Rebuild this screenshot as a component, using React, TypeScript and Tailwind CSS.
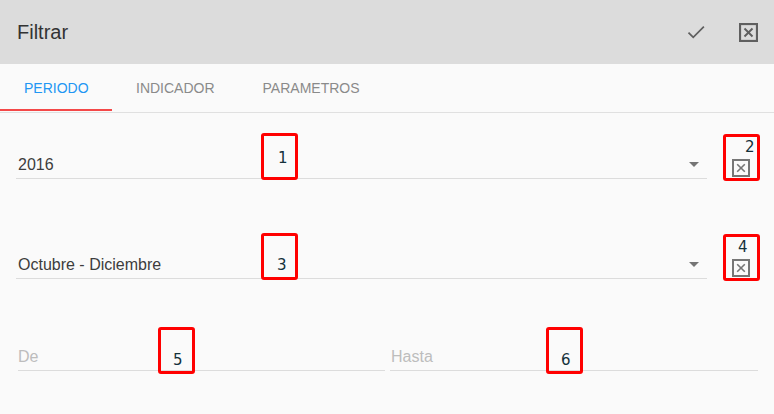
import React from 'react';

interface MarkerProps {
    label: string;
    boxClass: string;
    numClass: string;
}

// Recuadros rojos de anotacion sobre la captura
function Marker(props: MarkerProps) {
    return (
        <div className={`absolute w-[37px] h-[47px] border-[3px] border-[#ff0000] rounded-[3px] ${props.boxClass}`}>
            <span
                className={`absolute text-[15px] leading-none text-[#14313b] ${props.numClass}`}
                style={{fontFamily: '"DejaVu Sans", sans-serif'}}
            >
                {props.label}
            </span>
        </div>
    );
}

function ClearIcon() {
    return (
        <svg width="18" height="18" viewBox="0 0 18 18" className="block">
            <rect x="1" y="1" width="16" height="16" fill="none" stroke="#767676" strokeWidth="2" />
            <path d="M5.2 5.2 L12.8 12.8 M12.8 5.2 L5.2 12.8" stroke="#767676" strokeWidth="1.6" />
        </svg>
    );
}

function Arrow() {
    return (
        <svg width="10" height="5" viewBox="0 0 10 5" className="block">
            <path d="M0 0 L10 0 L5 5 Z" fill="#757575" />
        </svg>
    );
}

export default function App() {
    const tabs = ['PERIODO', 'INDICADOR', 'PARAMETROS'];

    return (
        <div
            className="relative w-[774px] h-[414px] bg-[#fafafa] overflow-hidden"
            style={{fontFamily: '"Liberation Sans", Arial, sans-serif'}}
        >
            {/* Cabecera */}
            <div className="h-16 bg-[#dcdcdc] flex items-center pl-[17px] pr-[16px]">
                <span className="text-[20px] text-[#333333] flex-grow">Filtrar</span>
                <svg width="22" height="22" viewBox="0 0 24 24" className="mr-[32px]">
                    <path d="M3.8 12.6 L9 17.8 L20.6 6.2" fill="none" stroke="#5f5f5f" strokeWidth="1.9" />
                </svg>
                <svg width="19" height="19" viewBox="0 0 18 18">
                    <rect x="1" y="1" width="16" height="16" fill="none" stroke="#5f5f5f" strokeWidth="2" />
                    <path d="M5.2 5.2 L12.8 12.8 M12.8 5.2 L5.2 12.8" stroke="#5f5f5f" strokeWidth="1.8" />
                </svg>
            </div>

            {/* Pestañas */}
            <div className="h-[49px] flex border-b border-[#e0e0e0]">
                {tabs.map((tab, i) => (
                    <div
                        key={tab}
                        className={`relative flex items-center px-6 text-[14px] ${i === 0 ? 'text-[#2196f3] w-[112px]' : 'text-[#8a8a8a]'}`}
                    >
                        {tab}
                        {i === 0 && <div className="absolute left-0 right-0 bottom-[1px] h-[2px] bg-[#f44848]" />}
                    </div>
                ))}
            </div>

            {/* Formulario */}
            <div className="flex flex-col pt-[34px]">
                <div className="flex items-end pl-4 pr-[24px]">
                    <div className="flex-grow h-8 flex items-center border-b border-[#dcdcdc] pl-[2px] pr-[8px] pt-[4px]">
                        <span className="flex-grow text-[16px] text-[#3d3d3d]">2016</span>
                        <Arrow />
                    </div>
                    <div className="ml-[25px] mb-[2px]">
                        <ClearIcon />
                    </div>
                </div>

                <div className="flex items-end pl-4 pr-[24px] mt-[68px]">
                    <div className="flex-grow h-8 flex items-center border-b border-[#dcdcdc] pl-[2px] pr-[8px] pt-[4px]">
                        <span className="flex-grow text-[16px] text-[#3d3d3d]">Octubre - Diciembre</span>
                        <Arrow />
                    </div>
                    <div className="ml-[25px] mb-[2px]">
                        <ClearIcon />
                    </div>
                </div>

                <div className="flex gap-[5px] pl-[18px] pr-4 mt-[60px]">
                    <div className="w-[367px] h-8 flex items-center border-b border-[#dcdcdc] pt-[5px]">
                        <span className="text-[16px] text-[#bdbdbd]">De</span>
                    </div>
                    <div className="flex-grow h-8 flex items-center border-b border-[#dcdcdc] pl-[1px] pt-[5px]">
                        <span className="text-[16px] text-[#bdbdbd]">Hasta</span>
                    </div>
                </div>
            </div>

            <Marker label="1" boxClass="left-[261px] top-[133px]" numClass="left-[14px] top-[15px]" />
            <Marker label="2" boxClass="left-[723px] top-[134px]" numClass="left-[19px] top-[3px]" />
            <Marker label="3" boxClass="left-[261px] top-[233px]" numClass="left-[13px] top-[22px]" />
            <Marker label="4" boxClass="left-[723px] top-[234px]" numClass="left-[12px] top-[3px]" />
            <Marker label="5" boxClass="left-[158px] top-[327px]" numClass="left-[12px] top-[23px]" />
            <Marker label="6" boxClass="left-[546px] top-[327px]" numClass="left-[12px] top-[23px]" />
        </div>
    );
}
